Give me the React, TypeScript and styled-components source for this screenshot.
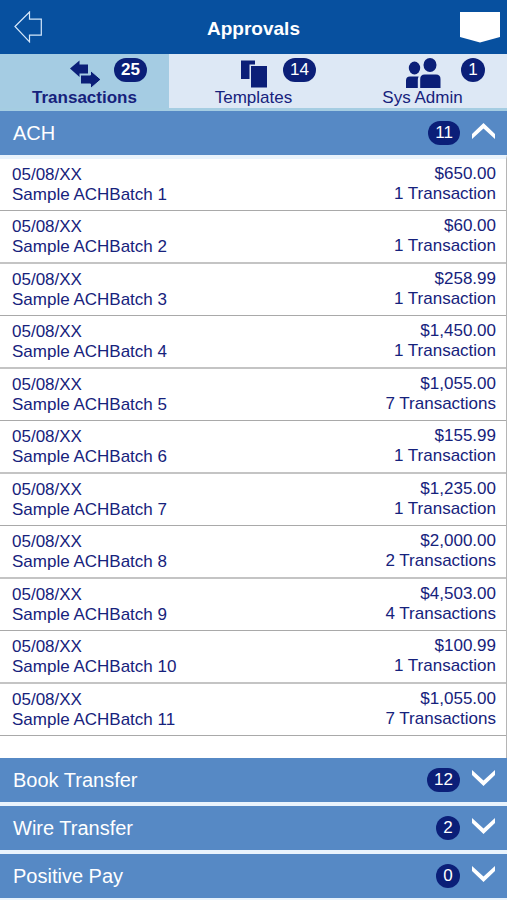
import React, { useState } from "react";
import styled, { createGlobalStyle } from "styled-components";

const GlobalStyle = createGlobalStyle`
  *, *::before, *::after { box-sizing: border-box; }
  body {
    margin: 0;
    background: #ffffff;
    color: #16227c;
    font-family: "Liberation Sans", Arial, Helvetica, sans-serif;
    font-size: 17px;
    line-height: 20px;
  }
  button {
    margin: 0;
    padding: 0;
    border: 0;
    background: none;
    color: inherit;
    font: inherit;
    cursor: pointer;
  }
  svg { display: block; }
`;

const Header = styled.header`
  display: grid;
  grid-template-columns: 1fr auto 1fr;
  align-items: center;
  min-height: 54px;
  padding: 0 6px 0 14px;
  background: #07509f;
  color: #ffffff;
`;

const Title = styled.h1`
  margin: 0;
  padding: 4px 8px 0 0;
  font-size: 19px;
  line-height: 24px;
`;

const HeaderButton = styled.button<{ $end?: boolean }>`
  justify-self: ${(p) => (p.$end ? "end" : "start")};
`;

const Tabs = styled.nav`
  display: grid;
  grid-template-columns: repeat(3, 1fr);
`;

const Tab = styled.button<{ $active: boolean }>`
  position: relative;
  display: flex;
  flex-direction: column;
  align-items: center;
  min-height: 57px;
  padding-top: 4px;
  border-bottom: 3px solid #a5cde2;
  background: ${(p) => (p.$active ? "#a5cce3" : "#dde8f5")};
  font-weight: ${(p) => (p.$active ? 700 : 400)};
`;

const Badge = styled.span`
  display: inline-flex;
  align-items: center;
  justify-content: center;
  min-width: 24px;
  height: 24px;
  padding: 0 7px;
  border-radius: 12px;
  background: #0b1f78;
  color: #ffffff;
  font-size: 17px;
  line-height: 24px;
`;

const TabBadge = styled(Badge)`
  position: absolute;
  top: 4px;
  right: 22px;
`;

const SectionButton = styled.button`
  display: flex;
  align-items: center;
  width: 100%;
  min-height: 44px;
  padding: 0 11px 0 13px;
  background: #5689c5;
  color: #ffffff;
  text-align: left;
`;

const SectionTitle = styled.span`
  flex: 1;
  font-size: 20px;
  line-height: 24px;
`;

const SectionCount = styled(Badge)`
  margin-right: 11px;
`;

const Section = styled.section<{ $open: boolean }>`
  border-bottom: ${(p) => (p.$open ? 0 : 4)}px solid #e9f3fc;
`;

const Entries = styled.ul`
  margin: 0;
  padding: 0 0 22px;
  border-top: 4px solid #e9f3fc;
  border-right: 1px solid #b5b5b5;
  list-style: none;
`;

const Entry = styled.li`
  display: flex;
  justify-content: space-between;
  gap: 12px;
  padding: 5px 10px 5px 12px;
  border-bottom: 2px solid #c4c4c4;

  &:nth-child(odd) {
    border-bottom: 1px solid #a9a9a9;
  }
`;

const Detail = styled.div`
  padding-top: 1px;
`;

const Amount = styled(Detail)`
  padding: 0 0 1px;
  text-align: right;
`;

const Line = styled.div`
  line-height: 20px;
`;

const BackIcon = () => (
  <svg width="28" height="32" viewBox="0 0 28 32" fill="none" stroke="#d5e7fa" strokeWidth="1.2" aria-hidden="true">
    <path d="M1 15.500 15.500 1v7.200h11.800v16H15.500v6.600Z" />
  </svg>
);

const PocketIcon = () => (
  <svg width="42" height="32" viewBox="0 0 42 32" aria-hidden="true">
    <path fill="#ffffff" d="M1 1h40v25L21 31.500 1 26Z" />
  </svg>
);

const TransferIcon = () => (
  <svg width="30" height="28" viewBox="0 0 30 28" fill="#0b1f78" aria-hidden="true">
    <path d="M0 8.500 9.500 .5V4.500h8.500v9H9.500v3.500Z" />
    <path d="M31 19.500 20.500 10.500v4.500H10.500v9h10v4.500Z" stroke="#a5cce3" strokeWidth="1" />
  </svg>
);

const TemplateIcon = () => (
  <svg width="28" height="28" viewBox="0 0 28 28" fill="#0b1f78" aria-hidden="true">
    <path d="M1 .5h14v4H9.500v14.500H1ZM11 6h16v21.500H11Z" />
  </svg>
);

const PeopleIcon = () => (
  <svg width="36" height="30" viewBox="0 0 36 30" fill="#0b1f78" aria-hidden="true">
    <ellipse cx="9.500" cy="10" rx="5.700" ry="6.500" />
    <ellipse cx="25" cy="7" rx="6.500" ry="7" />
    <path d="M1 30V22.500q0-4 4-4h8.600q-.8 1.500-.8 3.500v8ZM15.200 30V21q0-4.500 4.500-4.500H31q4.500 0 4.500 4.500v9Z" />
  </svg>
);

const ChevronIcon = styled.svg`
  margin-bottom: 5px;
`;

const Chevron = ({ up }: { up?: boolean }) => (
  <ChevronIcon width="25" height="18" viewBox="0 0 25 18" fill="#ffffff" aria-hidden="true">
    {up ? (
      <path d="M1 12 12.500 1 24 12v5L12.500 6.500 1 17Z" />
    ) : (
      <path d="M1 1v5l11.500 11L24 6V1L12.500 11.500Z" />
    )}
  </ChevronIcon>
);

const tabs = [
  { label: "Transactions", count: 25, Icon: TransferIcon },
  { label: "Templates", count: 14, Icon: TemplateIcon },
  { label: "Sys Admin", count: 1, Icon: PeopleIcon },
];

const IconBox = styled.span`
  display: flex;
  align-items: flex-end;
  height: 30px;
`;

const batches: [string, number][] = [
  ["$650.00", 1],
  ["$60.00", 1],
  ["$258.99", 1],
  ["$1,450.00", 1],
  ["$1,055.00", 7],
  ["$155.99", 1],
  ["$1,235.00", 1],
  ["$2,000.00", 2],
  ["$4,503.00", 4],
  ["$100.99", 1],
  ["$1,055.00", 7],
];

const sections = [
  { title: "ACH", count: 11 },
  { title: "Book Transfer", count: 12 },
  { title: "Wire Transfer", count: 2 },
  { title: "Positive Pay", count: 0 },
];

export default function App() {
  const [tab, setTab] = useState("Transactions");
  const [open, setOpen] = useState("ACH");

  return (
    <>
      <GlobalStyle />
      <Header>
        <HeaderButton aria-label="Back"><BackIcon /></HeaderButton>
        <Title>Approvals</Title>
        <HeaderButton $end aria-label="Menu"><PocketIcon /></HeaderButton>
      </Header>
      <Tabs>
        {tabs.map(({ label, count, Icon }) => (
          <Tab key={label} $active={tab === label} onClick={() => setTab(label)}>
            <IconBox><Icon /></IconBox>
            {label}
            <TabBadge>{count}</TabBadge>
          </Tab>
        ))}
      </Tabs>
      <main>
        {sections.map(({ title, count }) => (
          <Section key={title} $open={open === title}>
            <SectionButton
              aria-expanded={open === title}
              onClick={() => setOpen(open === title ? "" : title)}
            >
              <SectionTitle>{title}</SectionTitle>
              <SectionCount>{count}</SectionCount>
              <Chevron up={open === title} />
            </SectionButton>
            {title === "ACH" && open === title && (
              <Entries>
                {batches.map(([amount, n], i) => (
                  <Entry key={i}>
                    <Detail>
                      <Line>05/08/XX</Line>
                      <Line>Sample ACHBatch {i + 1}</Line>
                    </Detail>
                    <Amount>
                      <Line>{amount}</Line>
                      <Line>{n} {n === 1 ? "Transaction" : "Transactions"}</Line>
                    </Amount>
                  </Entry>
                ))}
              </Entries>
            )}
          </Section>
        ))}
      </main>
    </>
  );
}
